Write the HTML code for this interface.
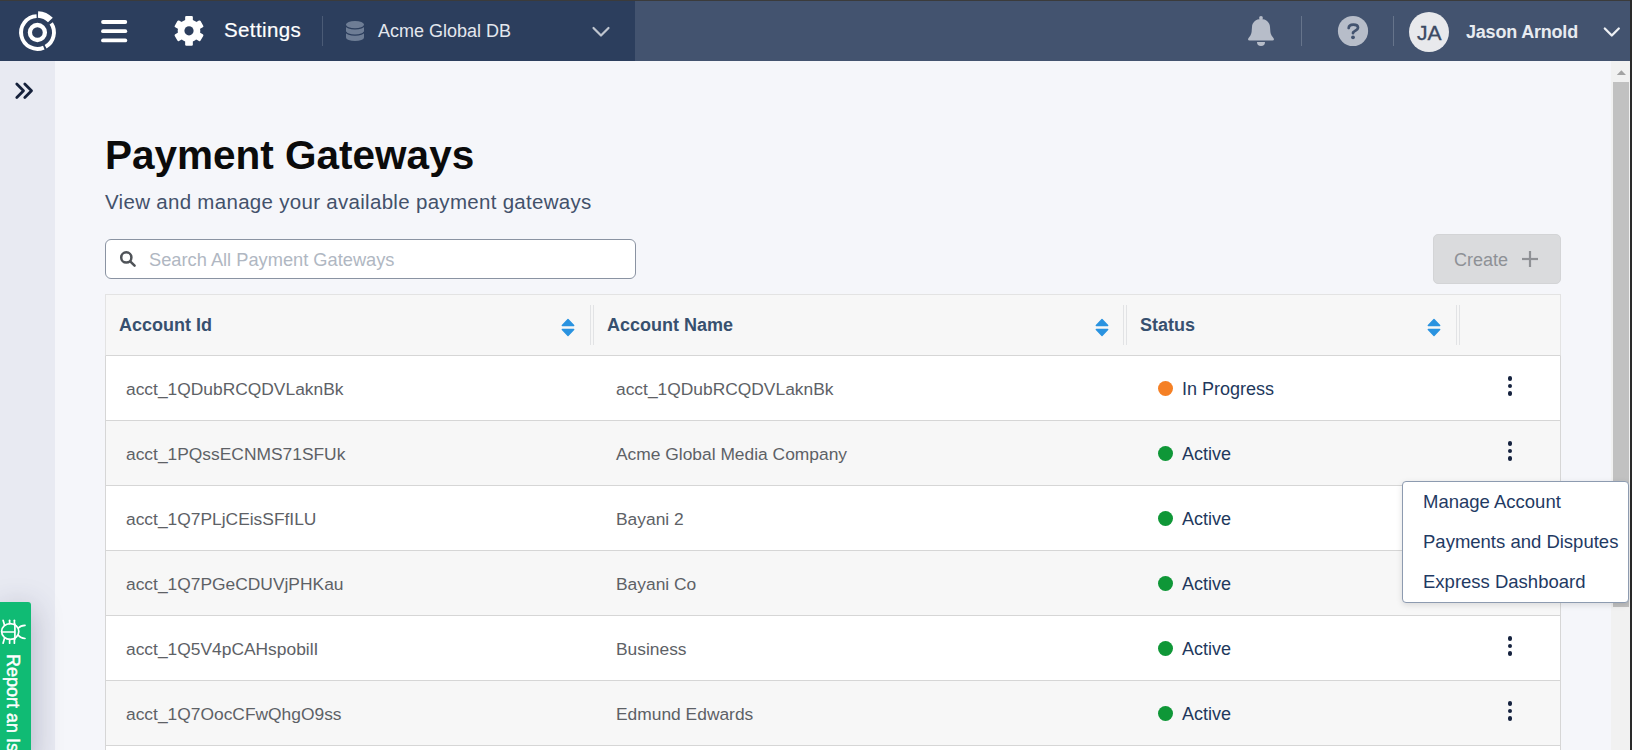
<!DOCTYPE html>
<html><head><meta charset="utf-8">
<style>
*{box-sizing:border-box;margin:0;padding:0}
html,body{width:1632px;height:750px;overflow:hidden;background:#f5f6fa;font-family:"Liberation Sans",sans-serif}
.abs{position:absolute}
.t{position:absolute;white-space:nowrap;line-height:1}
#topline{left:0;top:0;width:1632px;height:1px;background:#3b3b3b}
#hdrL{left:0;top:1px;width:635px;height:60px;background:#2c3e5d}
#hdrR{left:635px;top:1px;width:995px;height:60px;background:#43536f}
#rborder{left:1630px;top:0;width:2px;height:750px;background:#2a2a2a}
#side{left:0;top:61px;width:55px;height:689px;background:#e8eaf2}
#main{left:55px;top:61px;width:1556px;height:689px;background:#f5f6fa}
#sb{left:1611px;top:61px;width:19px;height:689px;background:#f1f1f1}
#thumb{left:1613px;top:82px;width:16px;height:525px;background:#c1c1c1}
.row{position:absolute;left:105px;width:1456px;height:65px;border-left:1px solid #d6d6d6;border-right:1px solid #d6d6d6;border-bottom:1px solid #d6d6d6}
.cell{position:absolute;white-space:nowrap;line-height:1;font-size:17.4px;color:#5d6166}
.st{position:absolute;white-space:nowrap;line-height:1;font-size:18px;color:#22385c}
.dot{position:absolute;width:15px;height:15px;border-radius:50%}
.keb{position:absolute;width:4.8px;height:4.8px;border-radius:50%;background:#16233f}
.hd{position:absolute;white-space:nowrap;line-height:1;font-size:18px;font-weight:bold;color:#37506f}
.sep{position:absolute;top:305px;width:4px;height:40px;border-left:1px solid #e2e3e5;border-right:1px solid #e2e3e5}
.menu-i{position:absolute;white-space:nowrap;line-height:1;font-size:18.5px;color:#1f3a63}
</style></head><body>
<div id="topline" class="abs"></div>
<div id="hdrL" class="abs"></div>
<div id="hdrR" class="abs"></div>
<div id="side" class="abs"></div>
<div id="main" class="abs"></div>
<div id="sb" class="abs"></div>
<div id="thumb" class="abs"></div>
<div id="rborder" class="abs"></div>


<!-- header content -->
<svg class="abs" style="left:0;top:0" width="1632" height="61" viewBox="0 0 1632 61">
  <g fill="none" stroke="#fff">
    <circle cx="37.4" cy="32.5" r="7.5" stroke-width="4.3"/>
    <path d="M38.03,14.45 A18.05,18.05 0 0 1 50.4,20.1" stroke-width="6.6"/>
    <path d="M51.2,23.3 A16.4,16.4 0 0 1 45.6,46.7" stroke-width="3.9"/>
    <path d="M43.8,47.6 A16.4,16.4 0 1 1 36.6,16.1" stroke-width="3.9"/>
  </g>
  <g stroke="#fff" stroke-width="3.8" stroke-linecap="round">
    <line x1="103" y1="22" x2="125.3" y2="22"/>
    <line x1="103" y1="31.2" x2="125.3" y2="31.2"/>
    <line x1="103" y1="40.4" x2="125.3" y2="40.4"/>
  </g>
  <g fill="#fff" transform="translate(189,30.8)">
    <circle r="11.3"/>
    <rect x="-3.85" y="-14.9" width="7.7" height="29.8" rx="1.2"/>
    <rect x="-3.85" y="-14.9" width="7.7" height="29.8" rx="1.2" transform="rotate(60)"/>
    <rect x="-3.85" y="-14.9" width="7.7" height="29.8" rx="1.2" transform="rotate(120)"/>
    <circle r="4.6" fill="#2c3e5d"/>
  </g>
  <line x1="322.5" y1="16" x2="322.5" y2="46" stroke="#4b5b76" stroke-width="1"/>
  <g>
    <path d="M346,24.6 A9,3.6 0 0 1 364,24.6 L364,37.4 A9,3.6 0 0 1 346,37.4 Z" fill="#6e7d95"/>
    <path d="M346,25.5 A9,3.3 0 0 0 364,25.5" fill="none" stroke="#2c3e5d" stroke-width="1.3"/>
    <path d="M346,31.8 A9,3.4 0 0 0 364,31.8" fill="none" stroke="#2c3e5d" stroke-width="1.3"/>
  </g>
  <polyline points="593.5,28 601,35.5 608.5,28" fill="none" stroke="#bfc5cf" stroke-width="2.2" stroke-linecap="round" stroke-linejoin="round"/>
  <g fill="#b7bdc9">
    <circle cx="1261" cy="17.9" r="1.9"/>
    <path d="M1261,19 C1256,19 1252.2,22.3 1252,27 L1251.6,32 C1251.2,35 1249.5,36.8 1248.4,38.2 Q1247.3,40.6 1249.6,40.6 L1272.4,40.6 Q1274.7,40.6 1273.6,38.2 C1272.5,36.8 1270.8,35 1270.4,32 L1270,27 C1269.8,22.3 1266,19 1261,19 Z"/>
    <path d="M1257,41.9 L1265,41.9 A4,4 0 0 1 1257,41.9 Z"/>
  </g>
  <line x1="1301.5" y1="16" x2="1301.5" y2="46" stroke="#66748b" stroke-width="1"/>
  <circle cx="1353" cy="31" r="15.1" fill="#b7bdc9"/>
  <path d="M1348.7,28 C1348.9,25.7 1350.7,24.6 1353.3,24.6 C1356.1,24.6 1358,25.8 1358,27.7 C1358,29.9 1354.5,30.6 1353.2,32.4 L1353,33.1" fill="none" stroke="#43536f" stroke-width="2.75" stroke-linecap="round"/>
  <circle cx="1353" cy="37.3" r="1.9" fill="#43536f"/>
  <line x1="1393.5" y1="16" x2="1393.5" y2="46" stroke="#66748b" stroke-width="1"/>
  <circle cx="1429" cy="32" r="20" fill="#e8e9ec"/>
  <polyline points="1604.8,28.5 1611.8,35.5 1618.8,28.5" fill="none" stroke="#eef0f4" stroke-width="2.3" stroke-linecap="round" stroke-linejoin="round"/>
</svg>
<div class="t" style="left:224px;top:19.9px;font-size:20.5px;letter-spacing:0.4px;color:#fff;-webkit-text-stroke:0.2px #fff">Settings</div>
<div class="t" style="left:378px;top:22px;font-size:18px;color:#e3e7ee">Acme Global DB</div>
<div class="t" style="left:1417px;top:21.6px;font-size:21px;color:#3b4a63;-webkit-text-stroke:0.35px #3b4a63">JA</div>
<div class="t" style="left:1466px;top:22.5px;font-size:18px;font-weight:bold;color:#e8ebf0;letter-spacing:-0.2px">Jason Arnold</div>

<!-- sidebar chevrons -->
<svg class="abs" style="left:0;top:61px" width="55" height="60" viewBox="0 61 55 60">
  <g fill="none" stroke="#15213b" stroke-width="2.8" stroke-linecap="round" stroke-linejoin="round">
    <polyline points="16.8,84 23.5,90.7 16.8,97.4"/>
    <polyline points="24.8,84 31.5,90.7 24.8,97.4"/>
  </g>
</svg>

<!-- title -->
<div class="t" style="left:105px;top:135.2px;font-size:40.5px;font-weight:bold;color:#0b0b0b">Payment Gateways</div>
<div class="t" style="left:105px;top:192px;font-size:20.5px;color:#43516a;letter-spacing:0.3px">View and manage your available payment gateways</div>

<!-- search -->
<div class="abs" style="left:105px;top:239px;width:531px;height:40px;border:1px solid #8a93a2;border-radius:6px;background:#fff"></div>
<div class="t" style="left:149px;top:251px;font-size:18.25px;color:#b0b7c2">Search All Payment Gateways</div>

<!-- create -->
<div class="abs" style="left:1433px;top:234px;width:128px;height:50px;border:1px solid #d3d4d6;border-radius:5px;background:#dadbdd"></div>
<div class="t" style="left:1454px;top:251px;font-size:18px;color:#8e9196">Create</div>

<!-- table header -->
<div class="abs" style="left:105px;top:294px;width:1456px;height:62px;background:#f7f7f7;border:1px solid #e3e3e3;border-bottom:1px solid #d6d6d6"></div>
<div class="hd" style="left:119px;top:316px">Account Id</div>
<div class="hd" style="left:607px;top:316px">Account Name</div>
<div class="hd" style="left:1140px;top:316px">Status</div>
<div class="sep" style="left:590px"></div>
<div class="sep" style="left:1123px"></div>
<div class="sep" style="left:1456px"></div>

<!--ROWS-->
<div class="row" style="top:356px;background:#ffffff"></div>
<div class="cell" style="left:126px;top:380.6px">acct_1QDubRCQDVLaknBk</div>
<div class="cell" style="left:616px;top:380.6px">acct_1QDubRCQDVLaknBk</div>
<div class="dot" style="left:1158px;top:380.5px;background:#f58025"></div>
<div class="st" style="left:1182px;top:380px">In Progress</div>
<div class="keb" style="left:1507.5px;top:376.1px"></div>
<div class="keb" style="left:1507.5px;top:383.6px"></div>
<div class="keb" style="left:1507.5px;top:391.1px"></div>
<div class="row" style="top:421px;background:#f7f7f7"></div>
<div class="cell" style="left:126px;top:445.6px">acct_1PQssECNMS71SFUk</div>
<div class="cell" style="left:616px;top:445.6px">Acme Global Media Company</div>
<div class="dot" style="left:1158px;top:445.5px;background:#0f9737"></div>
<div class="st" style="left:1182px;top:445px">Active</div>
<div class="keb" style="left:1507.5px;top:441.1px"></div>
<div class="keb" style="left:1507.5px;top:448.6px"></div>
<div class="keb" style="left:1507.5px;top:456.1px"></div>
<div class="row" style="top:486px;background:#ffffff"></div>
<div class="cell" style="left:126px;top:510.6px">acct_1Q7PLjCEisSFfILU</div>
<div class="cell" style="left:616px;top:510.6px">Bayani 2</div>
<div class="dot" style="left:1158px;top:510.5px;background:#0f9737"></div>
<div class="st" style="left:1182px;top:510px">Active</div>
<div class="row" style="top:551px;background:#f7f7f7"></div>
<div class="cell" style="left:126px;top:575.6px">acct_1Q7PGeCDUVjPHKau</div>
<div class="cell" style="left:616px;top:575.6px">Bayani Co</div>
<div class="dot" style="left:1158px;top:575.5px;background:#0f9737"></div>
<div class="st" style="left:1182px;top:575px">Active</div>
<div class="row" style="top:616px;background:#ffffff"></div>
<div class="cell" style="left:126px;top:640.6px">acct_1Q5V4pCAHspobilI</div>
<div class="cell" style="left:616px;top:640.6px">Business</div>
<div class="dot" style="left:1158px;top:640.5px;background:#0f9737"></div>
<div class="st" style="left:1182px;top:640px">Active</div>
<div class="keb" style="left:1507.5px;top:636.1px"></div>
<div class="keb" style="left:1507.5px;top:643.6px"></div>
<div class="keb" style="left:1507.5px;top:651.1px"></div>
<div class="row" style="top:681px;background:#f7f7f7"></div>
<div class="cell" style="left:126px;top:705.6px">acct_1Q7OocCFwQhgO9ss</div>
<div class="cell" style="left:616px;top:705.6px">Edmund Edwards</div>
<div class="dot" style="left:1158px;top:705.5px;background:#0f9737"></div>
<div class="st" style="left:1182px;top:705px">Active</div>
<div class="keb" style="left:1507.5px;top:701.1px"></div>
<div class="keb" style="left:1507.5px;top:708.6px"></div>
<div class="keb" style="left:1507.5px;top:716.1px"></div>
<div class="row" style="top:746px;background:#ffffff"></div>
<!--/ROWS-->

<!-- icons in content -->
<svg class="abs" style="left:0;top:0" width="1632" height="750" viewBox="0 0 1632 750">
  <g fill="none" stroke="#4f5358" stroke-width="2.5" stroke-linecap="round">
    <circle cx="126.3" cy="257.4" r="5.1"/>
    <line x1="130.2" y1="261.3" x2="134.6" y2="265.7"/>
  </g>
  <g stroke="#8f9195" stroke-width="2.2">
    <line x1="1522" y1="259" x2="1538" y2="259"/>
    <line x1="1530" y1="251" x2="1530" y2="267"/>
  </g>
  <g fill="#2a93e0" stroke="#2a93e0" stroke-width="1.4" stroke-linejoin="round">
    <path d="M562.3,325.6 L568,319.6 L573.7,325.6 Z"/>
    <path d="M562.3,329.4 L573.7,329.4 L568,335.4 Z"/>
    <path d="M1096.3,325.6 L1102,319.6 L1107.7,325.6 Z"/>
    <path d="M1096.3,329.4 L1107.7,329.4 L1102,335.4 Z"/>
    <path d="M1428.3,325.6 L1434,319.6 L1439.7,325.6 Z"/>
    <path d="M1428.3,329.4 L1439.7,329.4 L1434,335.4 Z"/>
  </g>
  <path d="M1616.8,75 L1621.4,70.2 L1626,75 Z" fill="#a3a3a3"/>
</svg>

<!-- dropdown menu -->
<div class="abs" style="left:1402px;top:481px;width:227px;height:122px;background:#fff;border:1px solid #8d9bb0;border-radius:4px;box-shadow:0 2px 6px rgba(0,0,0,0.12)"></div>
<div class="menu-i" style="left:1423px;top:493.2px">Manage Account</div>
<div class="menu-i" style="left:1423px;top:533px">Payments and Disputes</div>
<div class="menu-i" style="left:1423px;top:573.2px">Express Dashboard</div>

<!-- report tab -->
<div class="abs" style="left:0;top:602px;width:31px;height:160px;background:#10bb74;border-radius:0 3px 0 0;box-shadow:2px 6px 30px rgba(50,50,90,0.28)"></div>
<svg class="abs" style="left:0;top:602px" width="31" height="148" viewBox="0 602 31 148">
  <g fill="none" stroke="#fff" stroke-width="1.7" stroke-linecap="round">
    <ellipse cx="10.2" cy="631.5" rx="8.6" ry="7.8"/>
    <line x1="1.8" y1="632" x2="14.6" y2="632"/>
    <line x1="14.9" y1="624.2" x2="14.9" y2="638.8"/>
    <path d="M18.5,628 Q20.5,625.6 25,625.4"/>
    <path d="M18.5,635.5 Q20.5,638 25,638.5"/>
    <line x1="3.1" y1="620.3" x2="4.4" y2="624.8"/>
    <line x1="9.6" y1="620.3" x2="9.6" y2="623.7"/>
    <line x1="14.4" y1="620.3" x2="14.4" y2="624"/>
    <line x1="3.1" y1="643.2" x2="4.4" y2="638.6"/>
    <line x1="9.6" y1="643.2" x2="9.6" y2="639.5"/>
    <line x1="14.4" y1="643.2" x2="14.4" y2="639.3"/>
  </g>
</svg>
<div class="t" style="left:22px;top:654px;font-size:18px;color:#fff;transform-origin:0 0;transform:rotate(90deg);-webkit-text-stroke:0.45px #fff">Report an Issue</div>

</body></html>
